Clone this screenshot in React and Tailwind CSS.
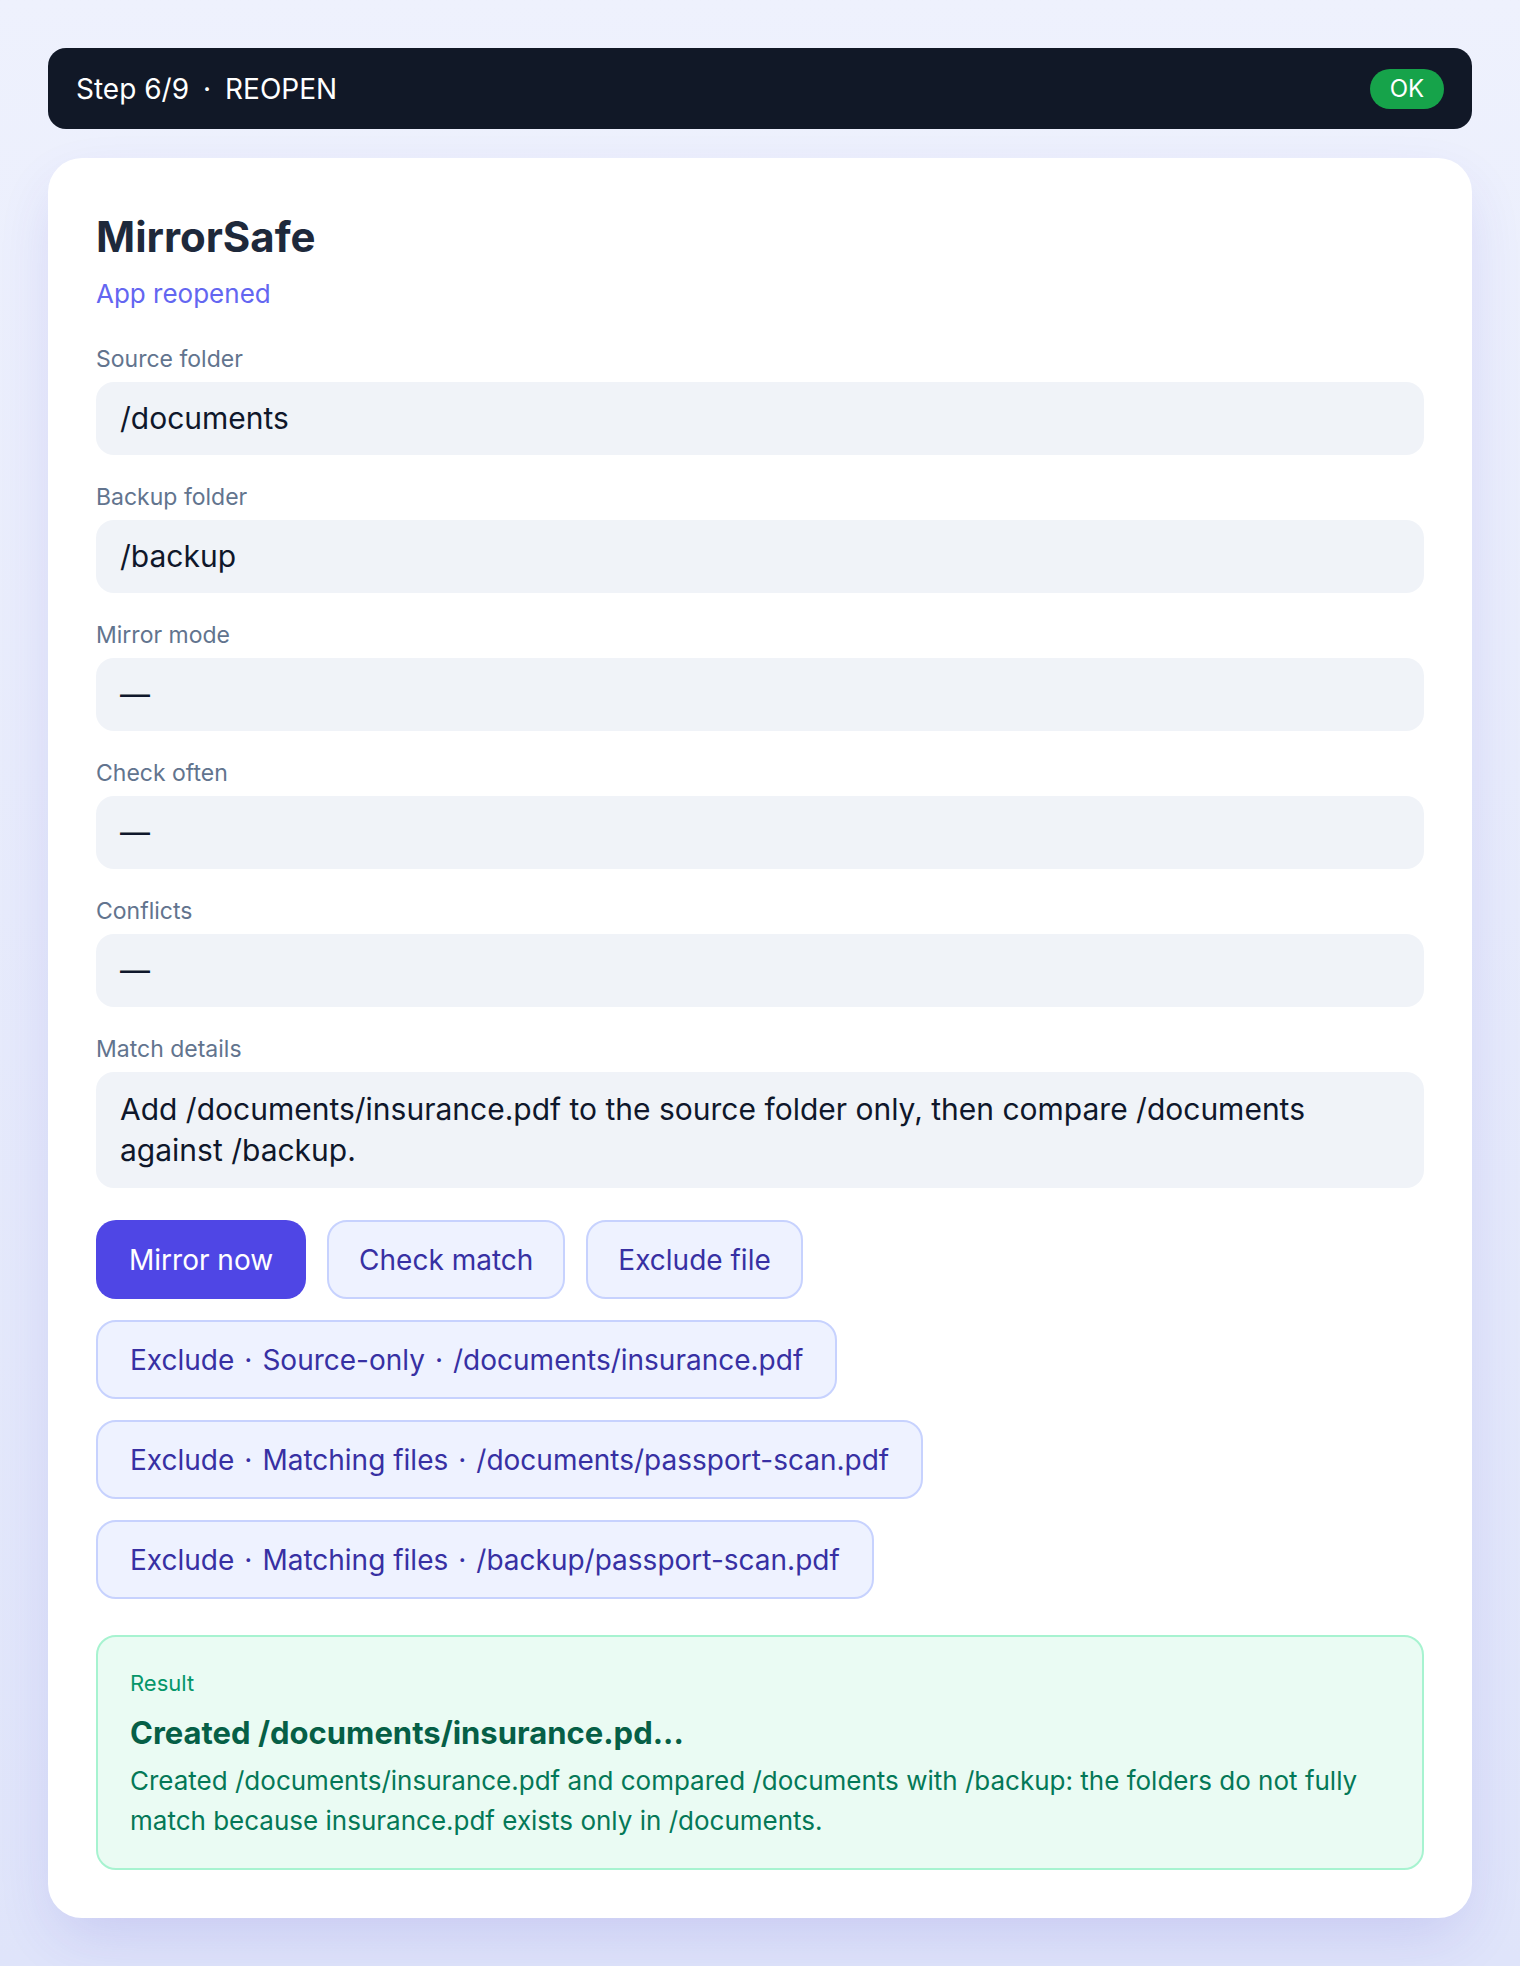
const fields = [
  { label: 'Source folder', value: '/documents' },
  { label: 'Backup folder', value: '/backup' },
  { label: 'Mirror mode', value: '—' },
  { label: 'Check often', value: '—' },
  { label: 'Conflicts', value: '—' },
]

const excludes = [
  ['Exclude', 'Source-only', '/documents/insurance.pdf'],
  ['Exclude', 'Matching files', '/documents/passport-scan.pdf'],
  ['Exclude', 'Matching files', '/backup/passport-scan.pdf'],
]

const Field = ({ label, children }) => (
  <div className="flex flex-col">
    <label className="text-[23px] leading-[33px] text-slate-500">{label}</label>
    <div className="mt-[6px] rounded-[18px] bg-[#f0f3f8] px-6 py-4 text-[30px] leading-[41px] text-slate-900">
      {children}
    </div>
  </div>
)

const Dot = () => <span className="mx-[10px]">·</span>

export default function App() {
  return (
    <div
      className="min-h-screen w-full bg-gradient-to-b from-[#eef1fd] to-[#dfe4fa] px-12 pb-[49px] pt-12"
      style={{ fontFamily: 'Inter, "Noto Sans", sans-serif' }}
    >
      {/* top status bar */}
      <div className="flex h-[81px] items-center justify-between rounded-[18px] bg-[#111827] px-7 text-white">
        <span className="text-[28px]">
          Step 6/9<span className="mx-[14px]">·</span>REOPEN
        </span>
        <span className="flex h-[40px] w-[74px] items-center justify-center rounded-full bg-[#16a34a] text-[24px]">
          OK
        </span>
      </div>

      <div className="mt-[29px] rounded-[34px] bg-white p-12 shadow-[0_24px_60px_-10px_rgba(67,56,202,0.16)]">
        <h1 className="mt-[3px] text-[42px] font-bold leading-[55px] text-[#1e293b]">MirrorSafe</h1>
        <p className="mt-[10px] text-[26px] leading-[39px] text-[#6366f1]">App reopened</p>

        <div className="mt-[30px] flex flex-col gap-[26px]">
          {fields.map((f) => (
            <Field key={f.label} label={f.label}>
              {f.value}
            </Field>
          ))}
          <Field label="Match details">
            <div className="py-px">
              Add /documents/insurance.pdf to the source folder only, then compare /documents
              <br />
              against /backup.
            </div>
          </Field>
        </div>

        <div className="mt-8 flex gap-[21px]">
          <button className="h-[79px] rounded-[20px] bg-[#4f46e5] px-[33px] text-[28px] text-white">
            Mirror now
          </button>
          <button className="h-[79px] rounded-[20px] border-2 border-[#c7d2fe] bg-[#eef2ff] px-[30px] text-[28px] text-[#3730a3]">
            Check match
          </button>
          <button className="h-[79px] rounded-[20px] border-2 border-[#c7d2fe] bg-[#eef2ff] px-[30px] text-[28px] text-[#3730a3]">
            Exclude file
          </button>
        </div>

        <div className="mt-[21px] flex flex-col items-start gap-[21px]">
          {excludes.map(([a, b, c]) => (
            <button
              key={c + b}
              className="h-[79px] rounded-[20px] border-2 border-[#c7d2fe] bg-[#eef2ff] px-[32px] text-[28px] text-[#3730a3]"
            >
              {a}
              <Dot />
              {b}
              <Dot />
              {c}
            </button>
          ))}
        </div>

        <div className="mt-9 rounded-[20px] border-2 border-[#a7f3d0] bg-[#eafbf3] px-8 pb-[27px] pt-[30px]">
          <div className="text-[22px] leading-[33px] text-[#059669]">Result</div>
          <div className="mt-[13px] text-[31px] font-bold leading-[40px] text-[#065f46]">
            Created /documents/insurance.pd...
          </div>
          <p className="mt-[8px] text-[26px] leading-[40px] text-[#047857]">
            Created /documents/insurance.pdf and compared /documents with /backup: the folders do not fully match
            because insurance.pdf exists only in /documents.
          </p>
        </div>
      </div>
    </div>
  )
}
